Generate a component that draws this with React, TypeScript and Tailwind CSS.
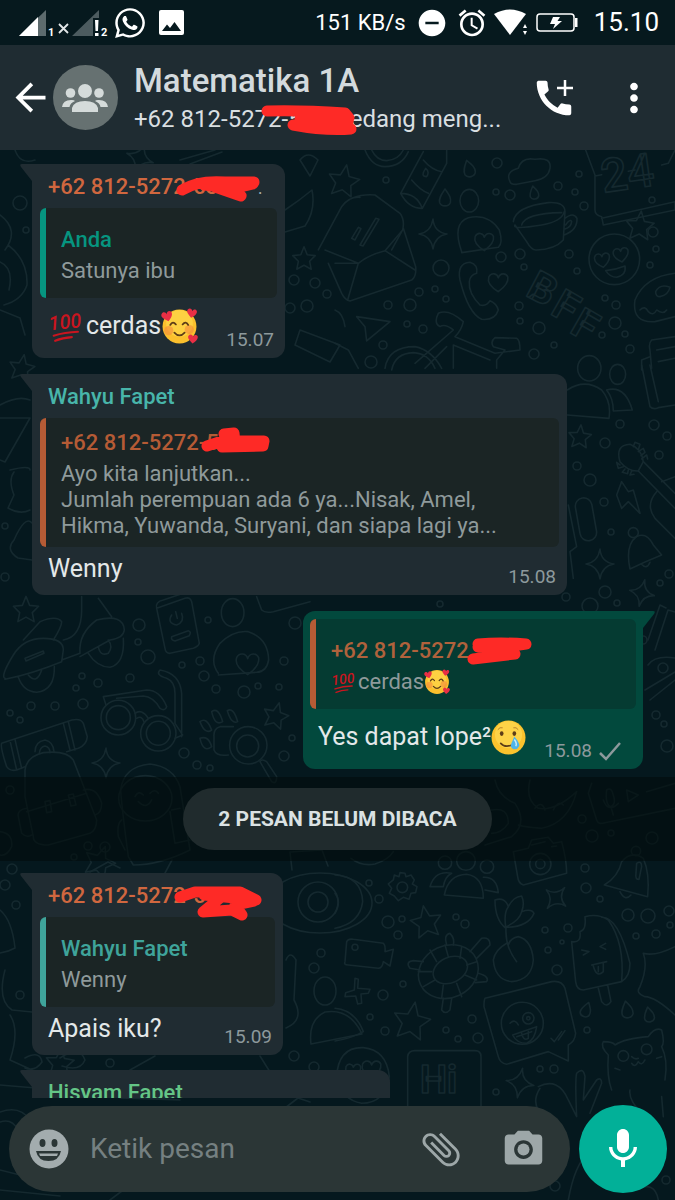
import { ReactNode } from "react";
import {
  MdAlarm,
  MdArrowBack,
  MdAttachFile,
  MdCall,
  MdMic,
  MdMoreVert,
  MdPhotoCamera,
  MdRemoveCircle,
} from "react-icons/md";
import { FaWhatsapp } from "react-icons/fa";

const STAR = "M0-14 4-4 14-3 7 4 9 14 0 9-9 14-7 4-14-3-4-4Z";
const SPARKLE = "M0-15Q1-2 14 0 2 2 0 15-2 2-14 0-2-2 0-15Z";
const HEART = "M0 12C-8 7-13 1-11-5-8-11-1-9 0-4 2-10 9-10 11-5 12 1 7 7 0 12Z";
const DROP = "M0-10C5-3 7 0 6 5 4 10-4 10-6 5-7 0-4-4 0-10Z";

// [x, y, size, rotation]
type Mark = [number, number, number, number];

const stars: Mark[] = [
  [26, 609, 0.9, 0], [276, 715, 0.9, 15], [344, 180, 1.1, 10], [640, 225, 1, 5],
  [304, 258, 0.8, 0], [580, 436, 0.8, 5], [426, 921, 1.1, -10], [412, 1020, 1.3, 10],
  [22, 367, 0.9, 10], [100, 861, 1.1, 20], [60, 1062, 1, 5],
];

const sparkles: Mark[] = [
  [433, 234, 1, 0], [106, 763, 1, 0], [600, 564, 1, 0], [642, 593, 0.9, 12],
  [556, 898, 0.9, 40], [520, 1083, 1, 10], [140, 158, 1, 20],
];

const drops: Mark[] = [
  [469, 169, 0.9, -15], [445, 198, 0.9, 0], [534, 193, 0.7, -10], [586, 1010, 0.8, 20],
  [627, 1010, 0.9, -10], [649, 1015, 0.8, -10],
];

const dots: [number, number, number][] = [
  [497, 163, 5], [510, 195, 5], [496, 192, 3], [386, 180, 3], [579, 174, 3], [558, 186, 4],
  [575, 192, 3], [584, 206, 4], [653, 232, 5], [656, 249, 3], [650, 265, 3], [501, 257, 5],
  [520, 254, 5], [569, 254, 4], [524, 267, 3], [577, 271, 3], [441, 268, 8], [419, 292, 4],
  [435, 289, 3], [446, 299, 3], [410, 305, 6], [388, 305, 4], [407, 324, 3], [423, 329, 4],
  [519, 306, 4], [520, 321, 3], [539, 328, 6], [605, 298, 3], [616, 305, 4], [615, 323, 6],
  [602, 335, 3], [625, 334, 3], [630, 349, 4], [554, 345, 3], [534, 354, 5], [371, 362, 6],
  [383, 345, 4], [620, 424, 4], [654, 425, 5], [667, 436, 4], [605, 443, 5], [659, 455, 4],
  [577, 466, 4], [590, 480, 6], [604, 502, 4], [611, 532, 3], [669, 574, 4], [660, 583, 3],
  [605, 592, 6], [566, 597, 4], [20, 203, 7], [26, 230, 3], [294, 280, 5], [315, 283, 5],
  [327, 294, 4], [290, 308, 5], [307, 306, 6], [5, 526, 3], [5, 577, 4], [139, 625, 6],
  [138, 642, 3], [148, 657, 7], [208, 620, 3], [200, 661, 4], [182, 665, 3], [204, 676, 5],
  [130, 678, 4], [98, 683, 4], [82, 676, 3], [76, 688, 3], [83, 704, 5], [55, 706, 4],
  [31, 706, 4], [10, 713, 3], [20, 720, 3], [216, 689, 4], [244, 692, 6], [258, 686, 3],
  [279, 687, 3], [284, 661, 4], [295, 623, 6], [184, 753, 5], [197, 765, 4], [210, 768, 3],
  [292, 738, 3], [284, 756, 5], [10, 790, 4], [88, 846, 4], [105, 847, 5], [74, 857, 3],
  [582, 819, 4], [592, 836, 6], [611, 833, 3], [652, 838, 6], [585, 868, 4], [586, 888, 5],
  [600, 899, 3], [628, 915, 6], [648, 916, 7], [669, 911, 5], [636, 936, 3], [656, 934, 4],
  [670, 925, 3], [369, 883, 3], [379, 899, 4], [388, 922, 6], [402, 919, 3], [398, 935, 4],
  [456, 917, 3], [465, 924, 4], [545, 930, 3], [568, 928, 4], [562, 942, 2], [548, 950, 3],
  [557, 970, 5], [383, 995, 5], [403, 984, 3], [370, 1017, 3], [385, 1031, 4], [446, 1030, 3],
  [458, 1039, 3], [478, 1038, 5], [472, 1019, 4], [587, 1030, 3], [540, 1069, 3], [554, 1069, 4],
  [496, 1092, 3], [555, 1186, 5], [321, 953, 4], [314, 968, 5], [12, 869, 5], [5, 885, 5],
  [16, 905, 4], [20, 995, 4], [294, 1056, 5], [110, 1063, 4], [314, 1067, 5], [666, 1180, 4],
  [652, 200, 3], [643, 640, 4], [663, 668, 5], [656, 715, 4], [667, 746, 6], [664, 724, 3],
  [440, 604, 3], [617, 603, 3], [590, 606, 8],
];

const marks = (items: Mark[], d: string) =>
  items.map(([x, y, s, r], i) => (
    <path key={i} d={d} transform={`translate(${x} ${y}) rotate(${r}) scale(${s})`} />
  ));

function Wallpaper() {
  return (
    <svg
      aria-hidden="true"
      viewBox="0 150 675 1050"
      preserveAspectRatio="xMidYMin slice"
      className="absolute inset-0 h-full w-full font-[Roboto,sans-serif] [&_*]:[vector-effect:non-scaling-stroke]"
      fill="none"
      stroke="#15292f"
      strokeWidth="1.6"
      strokeLinecap="round"
      strokeLinejoin="round"
    >
      {marks(stars, STAR)}
      {marks(sparkles, SPARKLE)}
      {marks(drops, DROP)}
      {dots.map(([x, y, r], i) => (
        <circle key={i} cx={x} cy={y} r={r} />
      ))}

      {/* top right: envelope, flask, cup, phone, bike */}
      <g transform="translate(335 150) scale(.3333)">
        <path d="M-50 300 20 170Q50 130 120 135L195 190Q210 210 203 240L150 302Q100 315 70 340L-30 300M205 235 242 350Q245 380 230 390L45 453Q30 450 20 430L-20 340M70 340 38 450M150 302 240 360M20 170Q40 140 75 142M0 340H70" />
        <path d="M50 265 70 232 78 236 60 270ZM75 285 122 205 132 208 84 288ZM170 300 200 245" />
        <path d="M90 0Q110 50 150 50 200 50 220 5M110 0Q125 32 155 32 190 30 205 0M265 5 197 130Q220 175 262 175L335 40V0M265 30Q290 60 320 65M230 90Q255 120 280 130M197 130Q245 130 262 175M272 55Q285 65 275 80 255 80 272 55Z" />
        <ellipse cx="403" cy="152" rx="28" ry="34" />
        <path d="M380 305Q350 220 400 203 460 190 493 240 505 280 490 292L380 308" />
        <path d={HEART} transform="translate(448 272) scale(2.5)" />
        <path d={HEART} transform="translate(490 394) scale(2.6)" />
        <path d="M525 95Q510 65 550 55 560 20 600 28 650 20 645 55 640 85 600 92L545 103Q528 104 525 95Z" />
        <path d="M535 215Q540 170 640 158 690 155 690 185L685 270Q660 298 605 300 590 302 575 275L540 225Q530 240 620 225 680 215 688 185M560 225Q570 190 680 188M690 205Q715 185 726 205 728 240 688 255M692 225Q705 205 710 215 708 232 690 237" />
        <path d="M752 0 780 75V180Q780 195 800 200L805 225 1020 180V155L800 205M780 78 800 74M880 64 900 60M980 45 1000 40 1020 0" />
        <text x="805" y="128" fontSize="140" fontWeight="500" transform="rotate(-8 805 128)">24</text>
        <circle cx="838" cy="328" r="76" />
        <path d={HEART} transform="translate(802 328) rotate(-8) scale(2)" />
        <path d={HEART} transform="translate(858 312) rotate(-8) scale(2)" />
        <path d="M812 362Q840 360 870 348 875 375 845 382 825 382 812 362Z" />
        <path d="M375 390Q365 340 405 337 430 345 425 370 405 375 403 395 400 430 435 465 455 470 465 452 485 460 490 480 480 512 440 508 400 490 375 390Z" />
        <text x="568" y="435" fontSize="125" fontWeight="700" transform="rotate(28 568 435)">B</text>
        <text x="642" y="490" fontSize="125" fontWeight="700" transform="rotate(30 642 490)">F</text>
        <text x="700" y="545" fontSize="125" fontWeight="700" transform="rotate(30 700 545)">F</text>
        <path d="M1020 370Q930 380 900 450 890 520 960 515L1020 500M915 480Q930 465 940 485 955 500 965 480 985 495 995 480M962 425Q975 400 1005 412 1000 435 975 440 962 440 962 425Z" />
        <path d="M65 500 165 515 95 573 90 530ZM0 480Q25 490 30 530M0 580 40 600 70 655" />
        <path d="M150 655Q160 590 240 590 290 600 320 655M170 660Q180 610 235 608 280 610 300 655M240 640 355 540Q330 520 315 530 295 520 310 490 340 475 385 515 380 540 360 560L480 610 555 600Q555 570 545 565L480 563Q465 575 475 590L510 600 485 630V655M335 590 270 655M355 585V655M355 585 465 630" />
        <path d="M1020 560 950 570Q940 580 945 600L950 655M965 600 1020 590M970 635 1020 625M945 620 920 630V660" />
      </g>

      {/* beside the second message: people, guitar, bell */}
      <g transform="translate(335 365) scale(.3333)">
        <ellipse cx="763" cy="10" rx="35" ry="38" />
        <ellipse cx="848" cy="28" rx="24" ry="30" />
        <path d="M697 75Q750 40 800 75 830 110 822 160L697 150M815 75Q870 60 892 135L835 138Q835 100 815 75M920 0 945 125Q955 135 970 128L1020 120M945 0 970 110" />
        <path d="M855 290Q840 240 885 238 920 250 925 290L910 318Q880 320 855 290ZM895 245 900 232 915 238 910 255M910 260 925 250 930 262 918 272M920 282 935 270 938 282M855 300 845 292 850 310 865 305M870 312 862 322 878 326 880 315M890 318 885 330 897 328" />
        <path d="M925 290 1020 385M910 318 1020 430M980 350 1020 335M965 380Q930 420 960 460L1020 520" />
        <path d="M860 350 880 380 895 375 915 445 880 410 860 430 845 390Z" />
        <rect x="728" y="398" width="50" height="130" rx="25" transform="rotate(-10 753 463)" />
        <path d="M885 612Q870 540 905 515 935 500 955 540L980 570Q930 590 885 612ZM920 598Q935 615 945 592M700 420 725 545 705 560 715 640" />
        <circle cx="895" cy="503" r="15" />
      </g>

      {/* left: scooter, glasses, bag, astronaut */}
      <g transform="translate(0 590) scale(.3333)">
        <path d="M15 265Q0 260 40 195 70 145 130 145 190 145 190 180L185 215Q100 250 15 268ZM70 150 120 95Q170 75 185 95 185 110 160 150M245 20V60Q245 140 190 150M295 25 335 80M185 210 240 190Q235 130 290 90 370 70 373 120 370 145 330 150L240 200M55 262Q70 305 110 307 165 300 163 230M265 190Q290 230 330 232 375 220 370 145M85 255Q110 285 125 240M295 170Q300 200 325 190 340 170 325 150M75 205 130 183 132 190 78 213Z" />
        <path d="M470 55 555 25Q570 20 575 35L598 160Q595 170 580 175L510 190Q497 190 495 175ZM470 55Q465 35 490 30L550 10M515 75Q500 100 530 105 555 95 545 70M527 65 532 85M515 140 565 122Q575 125 568 137L525 153Q512 150 515 140Z" />
        <ellipse cx="698" cy="68" rx="34" ry="42" />
        <path d="M655 250Q625 210 660 160 700 120 745 125 805 145 806 210 800 245 770 247L655 255" />
        <path d={HEART} transform="translate(743 218) scale(3)" />
        <circle cx="355" cy="383" r="52" />
        <circle cx="355" cy="383" r="36" />
        <circle cx="475" cy="430" r="53" />
        <circle cx="475" cy="430" r="36" />
        <path d="M310 320 440 300Q480 300 500 350 495 365 480 355 460 320 430 318L350 325M310 320 318 345M405 370Q425 355 445 385M410 385Q425 375 432 395M480 240Q540 250 545 310V440M480 240Q465 255 500 265 525 275 525 310V400L548 435 525 445" />
        <path d="M5 460 200 395Q240 380 250 400L262 440Q260 465 235 475L200 485M5 460Q0 470 20 530 30 545 50 540L75 530M30 452 50 540M45 448 65 535M190 400 210 480M205 395 225 480M105 485Q105 455 135 450 160 455 162 485M118 490Q120 470 135 468 150 472 150 488" />
        <path d="M75 540Q80 500 130 488 200 480 220 510L290 690Q290 720 270 730L145 765Q100 765 100 740L75 620ZM80 665 260 610M250 600Q290 590 305 640 305 670 285 675M80 655Q50 660 55 680L65 730Q80 745 95 735M135 635 150 632 155 665 140 668ZM205 615 220 612 228 645 213 648Z" />
        <ellipse cx="436" cy="625" rx="80" ry="68" />
        <path d="M385 800Q365 650 362 600 370 530 450 522 520 530 540 590L570 780Q480 825 400 825ZM405 620Q415 600 430 615M450 610Q465 595 475 610M415 635Q440 660 455 630M365 690Q350 700 355 740L375 780M515 660 540 655M510 665 525 760 570 750M0 725Q40 730 35 770 20 800 0 795" />
        <circle cx="745" cy="466" r="56" />
        <circle cx="743" cy="468" r="33" />
        <path d="M700 410H660Q640 415 642 440V480Q650 500 685 495M780 515 815 575Q830 585 830 560L800 515Q785 505 780 515ZM600 395Q620 380 635 420 615 435 600 395ZM635 365Q655 350 668 395 645 410 635 365ZM682 362Q700 350 713 395 695 405 682 362ZM600 445Q625 435 635 470 610 490 600 445ZM770 20 785 60Q795 70 820 65L930 35" />
      </g>

      {/* bottom right: camera, turtle, cherries, ice cream, chat */}
      <g transform="translate(335 780) scale(.3333)">
        <path d="M480 0Q490 50 540 70 580 130 530 170L450 195M585 0Q570 60 610 85 660 95 725 35 700 130 620 145 560 140 550 135M600 85Q620 60 630 90M655 90Q670 60 685 75M470 90Q520 80 520 130 500 160 470 160M770 10 760 40 785 120Q790 135 810 128L1020 85M815 30Q830 20 835 45 845 75 825 80 810 70 815 30ZM805 60Q820 100 850 70M830 88 835 105M875 30 910 45 880 65ZM935 35 1020 10" />
        <circle cx="330" cy="248" r="20" />
        <circle cx="393" cy="243" r="28" />
        <circle cx="456" cy="260" r="20" />
        <path d="M328 345Q340 285 395 283 445 290 445 355ZM285 320Q300 270 350 280 330 290 325 320ZM445 292Q485 290 490 338L450 330" />
        <path d="M535 215 580 205 590 180 640 172 655 190 680 185Q695 240 695 280L565 315Q550 310 548 290ZM590 195 630 185M650 200 665 198" />
        <circle cx="616" cy="252" r="32" />
        <circle cx="616" cy="252" r="14" />
        <path d="M808 315Q850 290 860 245 890 210 925 235 945 280 938 350ZM855 335Q870 365 888 345M905 250Q920 240 920 260L912 298Q900 300 903 280Z" />
        <circle cx="903" cy="213" r="14" />
        <path d="M195 278 210 280 213 290 228 285 238 300 232 312 246 320 242 338 228 340 222 358 205 352 190 362 178 348 163 340 170 325 160 312 175 300 178 285 192 290Z" />
        <circle cx="202" cy="322" r="16" />
        <path d="M30 545 35 485Q40 475 55 478L145 490Q152 495 150 515L175 508 165 558 145 545Q142 565 130 565L40 555Q25 555 30 545Z" />
        <circle cx="60" cy="502" r="9" />
        <path d="M0 285Q80 290 83 365 75 430 0 445M0 340Q20 365 0 400M60 595 70 598 68 625 105 628 100 640 78 642 80 670 68 672 62 648 30 650 32 638 58 630ZM0 685Q60 690 85 755 50 775 0 783M48 235Q80 260 120 252 160 240 175 215" />
        <ellipse cx="340" cy="575" rx="92" ry="78" transform="rotate(-25 340 575)" />
        <ellipse cx="346" cy="570" rx="54" ry="38" transform="rotate(-25 346 570)" />
        <path d="M335 495Q325 465 345 460 360 475 355 495M405 515 440 475Q465 470 465 495L425 535M255 570 225 565Q210 545 235 542L265 545M430 580Q465 590 455 605L420 608M325 655 320 690Q330 705 345 690L350 655M285 510 305 545M330 495 340 530M380 500 375 535M425 545 395 555M425 600 390 585M380 650 365 610M320 655 325 615M265 620 300 600M250 575 290 575" />
        <path d="M545 545Q510 500 513 445 480 420 480 360 510 350 520 380 535 350 560 348 570 370 560 395 590 385 597 400 580 440 515 442M513 445Q505 400 520 380M515 440Q555 420 560 395M515 490Q480 510 475 540 480 600 530 605 590 600 595 540 590 480 550 470 525 475 520 495" />
        <path d="M710 485Q740 490 735 455 755 450 750 410 790 400 820 420 870 490 860 605L745 630Q725 630 722 605ZM800 412Q850 410 885 550 885 590 860 605M790 625 800 665Q815 685 828 665L818 615M740 510 762 515 745 525M812 490 795 500 812 508M770 555 815 545M775 558Q785 595 805 575L805 550M790 560V575" />
        <path d="M450 655 650 605Q680 600 690 625L722 760Q720 785 700 795V843L640 815 515 853Q495 850 490 830L447 680Q447 660 450 655Z" />
        <circle cx="562" cy="730" r="63" />
        <circle cx="580" cy="715" r="17" />
        <circle cx="580" cy="715" r="5" />
        <path d="M525 730Q540 715 550 735M533 765 605 740Q600 780 575 790 545 790 533 765ZM560 760Q565 785 580 775V755M545 770 590 755M648 775 658 785 680 755M670 780 690 752" />
        <path d="M925 520Q960 530 1020 500M925 520Q940 560 915 620 900 640 930 650 960 650 1020 705" />
        <path d="M830 930Q815 890 820 825 795 800 805 785 835 785 840 795 870 775 940 770 960 740 980 750 990 790 980 800 1000 840 990 900M890 830Q900 840 910 835M890 850Q900 865 910 845 920 860 930 840M840 865 855 870M965 835 980 830" />
        <circle cx="865" cy="828" r="16" />
        <circle cx="935" cy="808" r="16" />
        <path d="M5 890Q10 800 85 803 155 810 163 890 150 970 80 970 20 960 5 890ZM218 1180V830Q220 812 240 812H420Q438 812 438 830V1180" />
        <path d={HEART} transform="translate(110 865) scale(2.5)" />
        <path d={HEART} transform="translate(55 870) scale(2)" />
        <text x="255" y="940" fontSize="115" fontWeight="700">Hi</text>
        <path d="M610 920Q670 890 700 960L725 1010Q720 900 725 880 745 860 750 890L745 960 785 900Q800 890 800 910L765 1000M615 925Q580 980 640 1020 680 1050 680 1100M885 930Q880 960 920 1000M980 950 985 1010M700 1260Q720 1150 760 1120M900 1230Q960 1200 970 1260" />
      </g>

      {/* strip left of the messages and around the last ones */}
      <g>
        <path d="M0 215Q20 230 5 250M8 245Q28 260 27 285 22 300 4 305M0 262Q14 268 9 290M0 310 20 318 25 335M0 418H30L5 462 0 460M0 405Q18 395 30 400M10 470Q30 465 30 470M14 472Q8 480 14 495L8 508Q20 515 30 510M14 540Q25 515 32 523M14 540Q5 550 18 558L32 560" />
        <path d="M0 910Q12 920 15 948 8 952 0 953M5 970Q-3 1000 12 1010L32 1012M10 1015Q20 1030 10 1060L32 1070M25 1058Q40 1050 42 1062 35 1072 25 1068M60 1058Q80 1045 85 1060 80 1072 62 1066M130 1070 155 1056M260 1056 275 1080M0 1085 180 1100 120 1098M0 1112Q20 1105 30 1120M0 1122Q12 1118 18 1130M0 1170 40 1180 130 1185 110 1200M0 1190 60 1196M285 1108 298 1098 310 1102" />
        <ellipse cx="320" cy="903" rx="52" ry="30" />
        <circle cx="318" cy="902" r="20" />
        <circle cx="318" cy="902" r="10" />
        <ellipse cx="325" cy="991" rx="11" ry="14" />
        <path d="M311 1044Q308 1020 325 1012 350 1008 362 1034ZM286 960Q290 950 296 960L294 1000Q305 1020 286 1028M90 872 108 862 120 868M165 873 172 860M292 870 290 852 322 850 328 866" />
        <path d="M180 160 215 150M190 164 222 152M15 150Q20 165 35 160M300 160Q308 150 318 160L310 176ZM285 210Q300 200 312 190 316 210 305 226L285 232M300 330 340 345 330 362 295 345Z" />
        <path d="M645 690 675 672M650 700 675 680M648 665Q655 655 675 658M655 650 668 610 675 612M648 640 660 605 666 608" />
      </g>
    </svg>
  );
}

function Scribble({ d, className, viewBox }: { d: string; className: string; viewBox: string }) {
  return (
    <svg
      aria-hidden="true"
      viewBox={viewBox}
      className={`absolute ${className}`}
      fill="none"
      stroke="#fe2a26"
      strokeLinecap="round"
      strokeLinejoin="round"
    >
      <path d={d} strokeWidth="11" />
    </svg>
  );
}

function HeartsFace({ className }: { className: string }) {
  const heart = "M0 5C-5 1-6-1-5-3-3-6 0-4 0-2 1-5 4-5 5-3 6 0 3 3 0 5Z";
  return (
    <svg viewBox="0 0 36 36" className={className} role="img" aria-label="wajah tersenyum dengan hati">
      <circle cx="18" cy="18" r="16.5" fill="#fbc02d" />
      <circle cx="18" cy="15" r="13" fill="#ffdc50" opacity=".6" />
      <circle cx="7.5" cy="22" r="4.5" fill="#f58a3c" opacity=".6" />
      <circle cx="27.5" cy="21" r="4.5" fill="#f58a3c" opacity=".6" />
      <path
        d="M9 16.5Q11.500 12 14.500 16M21 16Q24 12 26.500 16.500M13 24Q18 29.500 23 24"
        fill="none"
        stroke="#5d3d17"
        strokeWidth="1.7"
        strokeLinecap="round"
      />
      <g fill="#e92f45">
        <path d={heart} transform="translate(6 8) rotate(-15)" />
        <path d={heart} transform="translate(30 5) rotate(10) scale(.9)" />
        <path d={heart} transform="translate(31 30) rotate(5) scale(.9)" />
      </g>
    </svg>
  );
}

function TearFace({ className }: { className: string }) {
  return (
    <svg viewBox="0 0 36 36" className={className} role="img" aria-label="wajah tersenyum dengan air mata">
      <circle cx="18" cy="18" r="17.5" fill="#fbc32d" />
      <circle cx="18" cy="15" r="14" fill="#ffde58" opacity=".6" />
      <ellipse cx="11" cy="14" rx="1.9" ry="2.5" fill="#5d3d17" />
      <ellipse cx="24" cy="14" rx="1.9" ry="2.5" fill="#5d3d17" />
      <path d="M7 10Q9 7 12 8M23 8Q26 7 28 10" fill="none" stroke="#b7812a" strokeWidth="1" />
      <path d="M10 24Q14 28.500 21 26" fill="none" stroke="#5d3d17" strokeWidth="1.8" strokeLinecap="round" />
      <path d="M24 17Q30 24 29 27 27 31 23 30 19 28 21 24Z" fill="#4fb4e8" />
      <path d="M24 20Q27 24 25.500 27" fill="none" stroke="#c8ecfb" strokeWidth="1.5" />
    </svg>
  );
}

function Hundred({ className }: { className: string }) {
  return (
    <svg viewBox="0 0 36 36" className={className}>
      <g transform="rotate(-6 18 18)">
        <text x="1" y="21" fill="#c9151f" fontSize="21" fontStyle="italic" fontWeight="500" className="font-[Roboto,sans-serif]">
          100
        </text>
        <path d="M5 27Q17 24.500 31 25.500M6 32.500Q14 30 24 30.500" fill="none" stroke="#c9151f" strokeWidth="2.2" strokeLinecap="round" />
      </g>
    </svg>
  );
}

type QuoteProps = { bar: string; tone: string; name: string; bg?: string; mark?: ReactNode; children: ReactNode };

function Quote({ bar, tone, name, bg = "bg-[#1b2525]", mark, children }: QuoteProps) {
  return (
    <blockquote className={`flex min-h-[90px] overflow-hidden rounded-md ${bg}`}>
      <div className={`w-[6px] shrink-0 ${bar}`} />
      <div className="flex min-w-0 flex-1 flex-col justify-center gap-[2px] pt-[9px] pr-3 pb-2 pl-[15px]">
        <div className={`relative text-[22px] leading-8 font-medium ${tone}`}>
          {name}
          {mark}
        </div>
        <div className="text-[22px] leading-[26px] text-[#8f9a9b]">{children}</div>
      </div>
    </blockquote>
  );
}

type BubbleProps = {
  width: string;
  sender?: string;
  tone?: string;
  mark?: ReactNode;
  quote?: ReactNode;
  time?: string;
  sent?: boolean;
  tall?: boolean;
  children?: ReactNode;
};

function Bubble({ width, sender, tone, mark, quote, time, sent, tall, children }: BubbleProps) {
  return (
    <article
      className={`relative max-w-full shrink-0 rounded-xl pt-2 ${width} ${
        sent ? "self-end rounded-tr-none bg-[#02493d] px-[7px]" : "rounded-tl-none bg-[#202c32] px-2"
      }`}
    >
      <svg
        aria-hidden="true"
        viewBox="0 0 13 18"
        className={`absolute top-0 h-[18px] w-[13px] ${sent ? "-right-3 -scale-x-100 fill-[#02493d]" : "-left-3 fill-[#202c32]"}`}
      >
        <path d="M13 0H2Q-1 0 1 3L12 17H13Z" />
      </svg>
      {sender && (
        <h2 className={`relative mb-[6px] pl-2 text-[22px] leading-[30px] font-medium ${tone}`}>
          {sender}
          {mark}
        </h2>
      )}
      {quote}
      {time && (
        <div className="flex items-end justify-between pr-[3px] pl-2">
          <p className={`flex items-center pb-1 text-[25px] text-[#e3e8e9] ${tall ? "leading-[56px]" : "leading-[44px]"}`}>
            {children}
          </p>
          <div className="flex items-center gap-[7px] pb-2 text-[19px] leading-5 text-[#8d999c]">
            <time>{time}</time>
            {sent && (
              <svg viewBox="0 0 22 20" className="mr-3 h-5 w-[22px]" fill="none" stroke="currentColor" strokeWidth="2.5">
                <path d="M1 12 7 18 21 2" />
              </svg>
            )}
          </div>
        </div>
      )}
    </article>
  );
}

function StatusBar() {
  return (
    <div className="flex h-[45px] shrink-0 items-center justify-between bg-[#06191e] pr-4 pl-[19px] text-white">
      <div className="flex items-center">
        <svg viewBox="0 0 92 34" className="h-[34px] w-[92px]" aria-label="sinyal">
          <path d="M0 30 27 4V30Z" fill="#5d6b6e" />
          <path d="M0 30 19 11V30Z" fill="#fff" />
          <path d="M53 30 80 4V12H74V30Z" fill="#4c5b5f" />
          <path d="M76 14H79.500L79 25H76.500ZM76 27H79.500V30H76Z" fill="#fff" />
          <path d="M40 18 49 27M49 18 40 27" stroke="#e2e7e8" strokeWidth="1.8" />
          <text x="29" y="30" fill="#fff" fontSize="11" fontWeight="700">1</text>
          <text x="82" y="30" fill="#fff" fontSize="11" fontWeight="700">2</text>
        </svg>
        <FaWhatsapp className="ml-[2px] size-[34px]" />
        <svg viewBox="0 0 25 25" className="ml-3 size-[25px]" aria-hidden="true">
          <rect width="25" height="25" rx="2" fill="#fff" />
          <path d="M3 21 8 14.500 11 18 15.500 12 22 21Z" fill="#06191e" />
        </svg>
      </div>
      <div className="flex items-center">
        <span className="text-[22px]">151 KB/s</span>
        <MdRemoveCircle className="ml-[10px] size-8" />
        <MdAlarm className="ml-2 size-8" />
        <svg viewBox="0 0 34 27" className="ml-[6px] h-[27px] w-[34px]" fill="currentColor" aria-hidden="true">
          <path d="M0 5Q16-4 32 5L16 26Z" />
          <path d="M31 15 33 19H29ZM31 26 29 22H33Z" />
        </svg>
        <svg viewBox="0 0 42 20" className="ml-2 h-5 w-[42px]" aria-hidden="true">
          <rect x="1" y="1" width="37" height="17" rx="3" fill="none" stroke="#fff" strokeWidth="1.5" />
          <path d="M39 5H41.500V14H39ZM17 4H24L21.500 8H26L17 16 19 11H14Z" fill="#fff" />
        </svg>
        <span className="ml-4 text-[26px]">15.10</span>
      </div>
    </div>
  );
}

function ChatHeader() {
  return (
    <header className="flex h-[105px] shrink-0 items-center bg-[#1f2c32] pr-[18px] pl-2">
      <button aria-label="Kembali" className="text-white">
        <MdArrowBack className="size-[45px]" />
      </button>
      <svg viewBox="0 0 65 65" className="size-[65px] shrink-0" role="img" aria-label="Foto grup">
        <circle cx="32.5" cy="32.5" r="32.5" fill="#667171" />
        <g fill="#d5dbda">
          <circle cx="32" cy="26" r="7" />
          <circle cx="17.5" cy="28" r="4.8" />
          <circle cx="46" cy="28" r="4.8" />
          <path d="M19 47V43Q21 36 32 36T45 43V47ZM9 42Q10 34.500 19 35 21 35 22 36 17 38 16.500 42ZM55 42Q54 34.500 45 35 43 35 42 36 47 38 47.500 42Z" />
        </g>
      </svg>
      <div className="ml-4 min-w-0 flex-1 pt-[3px]">
        <h1 className="text-[33px] leading-10 font-medium text-[#d3dadd]">Matematika 1A</h1>
        <p className="relative text-[24px] leading-9 whitespace-nowrap text-[#d9dfe1]">
          +62 812-5272-5
          <span className="ml-[48px]">edang meng...</span>
          <Scribble
            className="top-0 left-[126px] h-[38px] w-[106px]"
            viewBox="260 103 106 38"
            d="M267 113Q300 112 345 115L349 120M293 127Q325 133 351 131M300 121H348M300 126 348 124"
          />
        </p>
      </div>
      <button aria-label="Panggilan grup" className="relative mr-[34px] text-white">
        <MdCall className="size-[46px]" />
        <svg viewBox="0 0 16 16" className="absolute top-[5px] right-1 size-4" stroke="currentColor" strokeWidth="2.5">
          <path d="M8 0V16M0 8H16" />
        </svg>
      </button>
      <button aria-label="Menu lainnya" className="text-white">
        <MdMoreVert className="size-[46px]" />
      </button>
    </header>
  );
}

function Composer() {
  return (
    <form className="relative flex h-[102px] shrink-0 items-center gap-[9px] pr-2 pl-[9px]" onSubmit={(e) => e.preventDefault()}>
      <div className="flex h-[86px] min-w-0 flex-1 items-center rounded-full bg-[#2b3636] pr-6 pl-5 text-[#9da7a8]">
        <button type="button" aria-label="Emoji">
          <svg viewBox="0 0 40 40" className="size-10">
            <circle cx="20" cy="20" r="19.5" fill="#a3acae" />
            <g fill="#2b3636">
              <ellipse cx="13.5" cy="14" rx="3" ry="4" />
              <ellipse cx="25.5" cy="14" rx="3" ry="4" />
              <path d="M7 22H32Q30 32 19.500 32T7 22Z" />
            </g>
            <path d="M10 24.500H29L28 27H11Z" fill="#a3acae" />
          </svg>
        </button>
        <input
          aria-label="Ketik pesan"
          placeholder="Ketik pesan"
          className="mx-[21px] min-w-0 flex-1 bg-transparent text-[28px] text-white outline-none placeholder:text-[#758081]"
        />
        <button type="button" aria-label="Lampirkan">
          <MdAttachFile className="size-[46px] -rotate-45" />
        </button>
        <button type="button" aria-label="Kamera" className="ml-[37px]">
          <MdPhotoCamera className="size-[45px]" />
        </button>
      </div>
      <button type="button" aria-label="Pesan suara" className="flex size-[88px] shrink-0 items-center justify-center rounded-full bg-[#02b098] text-white">
        <MdMic className="size-12" />
      </button>
    </form>
  );
}

export default function App() {
  return (
    <div className="flex h-screen flex-col overflow-hidden bg-[#05181e] font-[Roboto,sans-serif]">
      <StatusBar />
      <ChatHeader />
      <div className="relative flex min-h-0 flex-1 flex-col">
        <Wallpaper />
        <main className="relative flex min-h-0 flex-1 flex-col overflow-hidden pt-[14px]">
          <section className="flex shrink-0 flex-col gap-4 pr-8 pl-8">
            <Bubble
              width="w-[253px]"
              sender="+62 812-5272-53"
              tone="text-[#d0673f]"
              time="15.07"
              tall
              mark={
                <>
                  <span className="ml-10 text-sm text-[#a9b2b4]">.</span>
                  <Scribble
                    className="top-0 left-[135px] h-[36px] w-[90px]"
                    viewBox="175 172 90 36"
                    d="M182 190Q198 180 225 182L254 182 232 188 204 185M215 187 241 196 228 190 253 184"
                  />
                </>
              }
              quote={
                <Quote bar="bg-[#069580]" tone="text-[#069580]" name="Anda">
                  Satunya ibu
                </Quote>
              }
            >
              <Hundred className="mr-1 size-[34px]" />
              cerdas
              <HeartsFace className="size-[37px]" />
            </Bubble>
            <Bubble
              width="w-[535px]"
              sender="Wahyu Fapet"
              tone="text-[#48b5aa]"
              time="15.08"
              quote={
                <Quote
                  bar="bg-[#b55b35]"
                  tone="text-[#b55b35]"
                  name="+62 812-5272-5"
                  mark={
                    <Scribble
                      className="top-0 left-[138px] h-[32px] w-[76px]"
                      viewBox="199 424 76 32"
                      d="M207 443 222 438 264 438 263 443 222 444M224 431 234 430 235 440 224 436"
                    />
                  }
                >
                  Ayo kita lanjutkan...
                  <br />
                  Jumlah perempuan ada 6 ya...Nisak, Amel,
                  <br />
                  Hikma, Yuwanda, Suryani, dan siapa lagi ya...
                </Quote>
              }
            >
              Wenny
            </Bubble>
            <Bubble
              width="w-[340px]"
              time="15.08"
              sent
              tall
              quote={
                <Quote
                  bar="bg-[#b55b35]"
                  tone="text-[#b0623c]"
                  bg="bg-[#053b32]"
                  name="+62 812-5272"
                  mark={
                    <Scribble
                      className="top-0 left-[134px] h-[32px] w-[72px]"
                      viewBox="465 631 72 32"
                      d="M478 640Q500 638 526 640L500 644 478 643M473 655 515 650 500 646"
                    />
                  }
                >
                  <span className="flex items-center">
                    <Hundred className="mr-[3px] size-[24px]" />
                    cerdas
                    <HeartsFace className="size-[26px]" />
                  </span>
                </Quote>
              }
            >
              Yes dapat lope²
              <TearFace className="size-[35px]" />
            </Bubble>
          </section>

          <div className="mt-2 mb-3 flex shrink-0 justify-center bg-[#020c0c]/60 py-[11px]">
            <span className="rounded-full bg-[#202b2d] px-[35px] text-[21px] leading-[62px] font-bold text-[#dbe2e3]">
              2 PESAN BELUM DIBACA
            </span>
          </div>

          <section className="flex shrink-0 flex-col gap-[15px] pr-8 pl-8">
            <Bubble
              width="w-[251px]"
              sender="+62 812-5272-5"
              tone="text-[#d0673f]"
              time="15.09"
              mark={
                <Scribble
                  className="top-0 left-[132px] h-[42px] w-[92px]"
                  viewBox="172 881 92 42"
                  d="M180 897 195 892 240 892 256 900 204 895M220 898 203 912 232 910 242 915 235 905 254 901"
                />
              }
              quote={
                <Quote bar="bg-[#3fa49b]" tone="text-[#3fa49b]" name="Wahyu Fapet">
                  Wenny
                </Quote>
              }
            >
              Apais iku?
            </Bubble>
            <Bubble width="w-[358px]" sender="Hisyam Fapet" tone="text-[#64c586]" />
          </section>
        </main>
        <Composer />
      </div>
    </div>
  );
}
